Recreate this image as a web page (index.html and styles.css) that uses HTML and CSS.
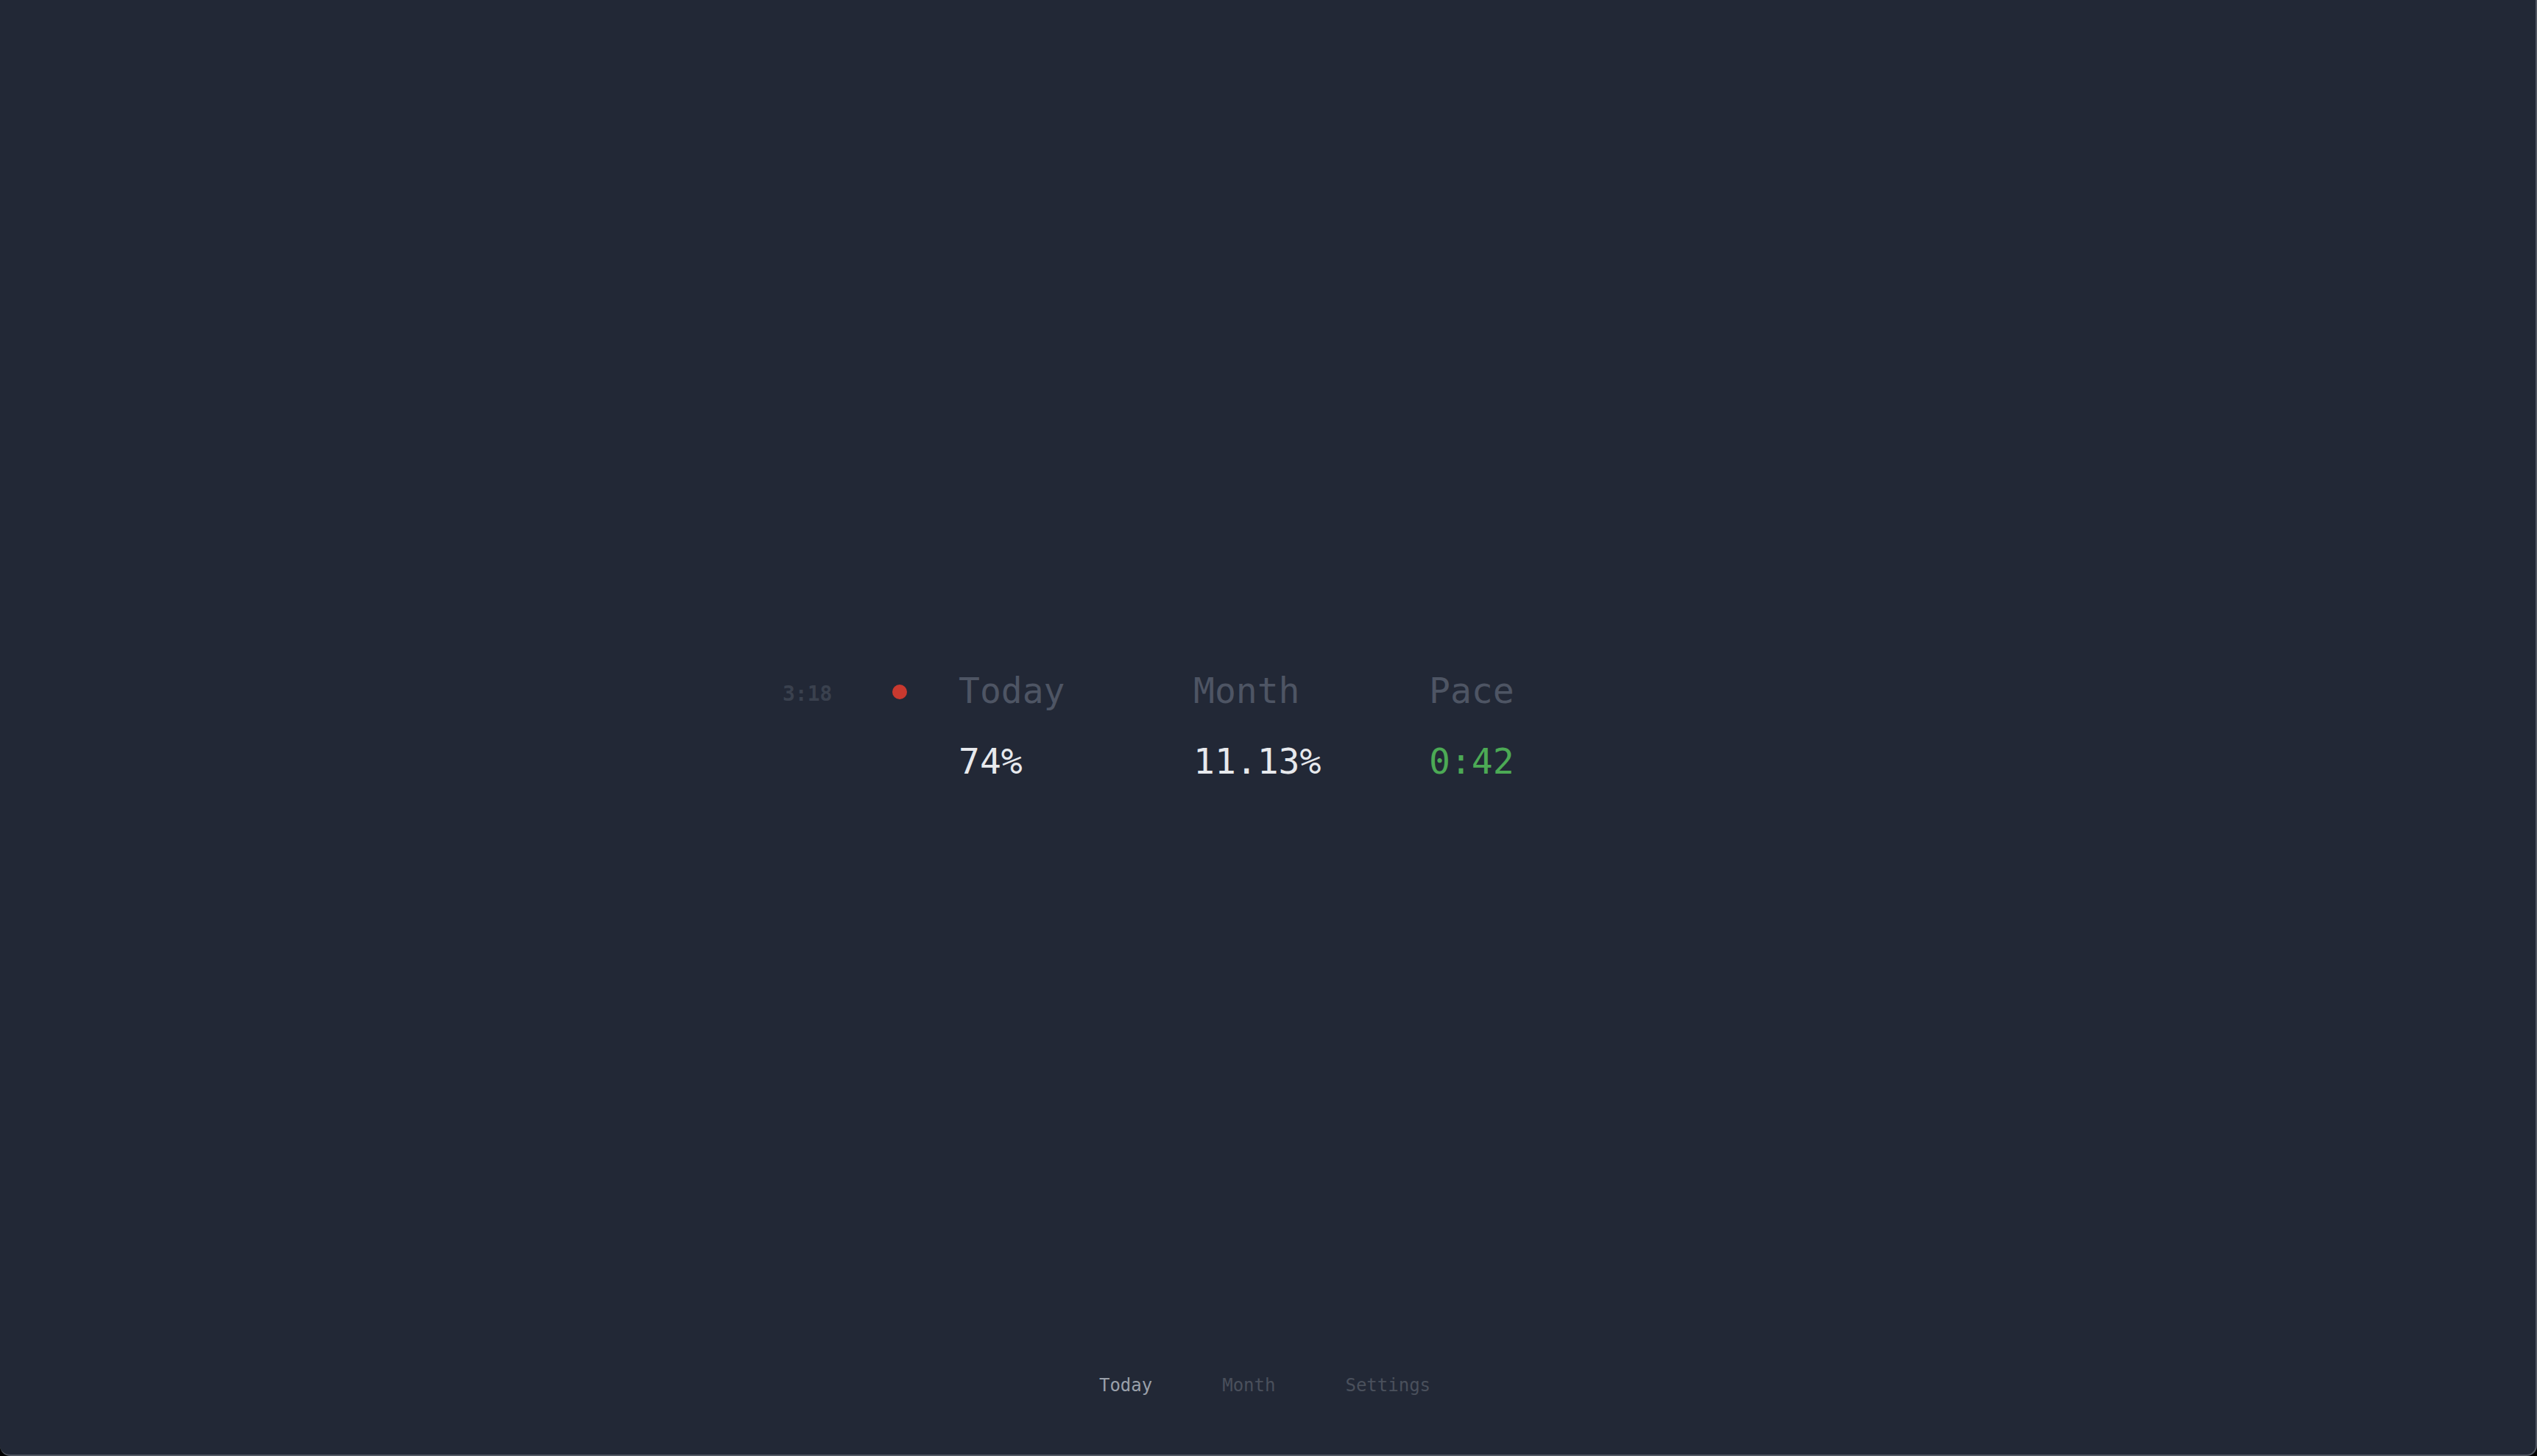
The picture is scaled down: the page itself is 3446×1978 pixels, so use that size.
FILE: index.html
```html
<!DOCTYPE html>
<html lang="en">
<head>
<meta charset="utf-8">
<title>Today</title>
<link rel="stylesheet" href="styles.css">
</head>
<body>
  <div class="app">
    <main class="stage">
      <div class="stats">
        <span class="time">3:18</span>
        <span class="dot-cell"><span class="dot"></span></span>
        <span class="label">Today</span>
        <span class="label">Month</span>
        <span class="label">Pace</span>
        <span class="blank"></span>
        <span class="blank"></span>
        <span class="value">74%</span>
        <span class="value">11.13%</span>
        <span class="value good">0:42</span>
      </div>
    </main>
    <nav class="tabs">
      <span class="tab active">Today</span>
      <span class="tab">Month</span>
      <span class="tab">Settings</span>
    </nav>
  </div>
</body>
</html>
```

FILE: styles.css
```css
html {
  margin: 0;
  padding: 0;
  background: #000;
}

body {
  margin: 0;
  padding: 0;
  font-family: "DejaVu Sans Mono", "Liberation Mono", monospace;
}

.app {
  box-sizing: border-box;
  height: 100vh;
  background: #222836;
  border-right: 2px solid #4f5561;
  border-bottom: 2px solid #4f5561;
  border-radius: 0 0 14px 14px;
  display: grid;
  grid-template-columns: 1fr;
  grid-template-rows: 1fr;
  overflow: hidden;
}

.stage {
  grid-area: 1 / 1;
  display: flex;
  align-items: center;
  justify-content: center;
  padding-bottom: 4px;
}

.stats {
  display: grid;
  grid-template-columns: 149px 88px 319px 320px 320px;
  row-gap: 38px;
  align-items: center;
  padding-right: 124px;
  margin-left: 6px;
}

.time {
  font-size: 28px;
  font-weight: bold;
  line-height: 34px;
  color: #3a414e;
  margin-top: 10px;
  margin-left: -2px;
}

.dot-cell {
  display: flex;
  align-items: center;
  margin-top: 4px;
  margin-left: -2px;
}

.dot {
  width: 20px;
  height: 20px;
  border-radius: 50%;
  background: #c9392f;
}

.label {
  font-size: 48px;
  line-height: 58px;
  color: #4e5564;
}

.value {
  font-size: 48px;
  line-height: 58px;
  color: #e7e9ed;
}

.value.good {
  color: #4caa55;
}

.tabs {
  grid-area: 1 / 1;
  align-self: end;
  display: flex;
  justify-content: center;
  gap: 95px;
  padding-bottom: 79px;
  padding-right: 8px;
}

.tab {
  font-size: 24px;
  line-height: 29px;
  color: #4a505c;
}

.tab.active {
  color: #9aa0aa;
}
```
